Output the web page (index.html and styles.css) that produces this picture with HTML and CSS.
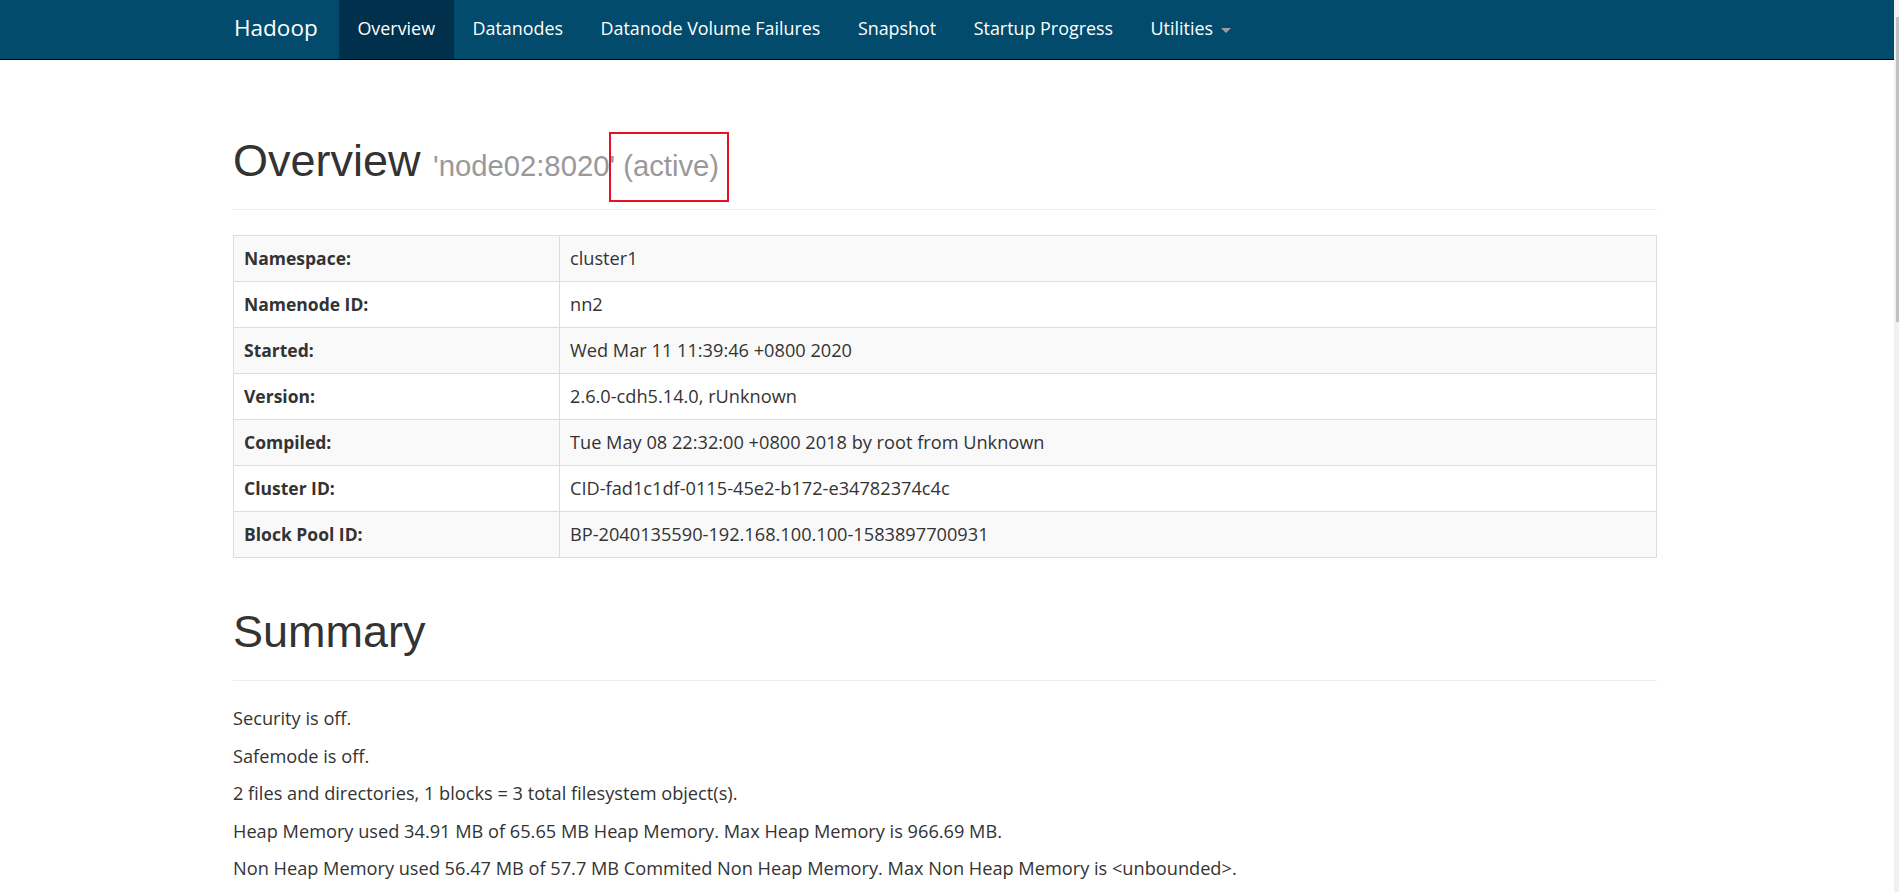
FILE: index.html
```html
<!DOCTYPE html>
<html lang="en">

<head>
    <meta charset="UTF-8" />
    <title>Namenode information</title>
    <link rel="stylesheet" href="styles.css">
</head>

<body>
    <div class="page">
        <div class="main">
            <nav class="navbar">
                <div class="container navbar-inner">
                    <a class="brand" href="#">Hadoop</a>
                    <ul class="nav">
                        <li class="active"><a href="#">Overview</a></li>
                        <li><a href="#">Datanodes</a></li>
                        <li><a href="#">Datanode Volume Failures</a></li>
                        <li><a href="#">Snapshot</a></li>
                        <li><a href="#">Startup Progress</a></li>
                        <li><a href="#">Utilities <span class="caret"></span></a></li>
                    </ul>
                </div>
            </nav>

            <div class="container content">
                <div class="page-header">
                    <h1>Overview <small>'node02:8020' <span class="marked">(active)</span></small></h1>
                </div>

                <table class="info-table">
                    <tr><th>Namespace:</th><td>cluster1</td></tr>
                    <tr><th>Namenode ID:</th><td>nn2</td></tr>
                    <tr><th>Started:</th><td>Wed Mar 11 11:39:46 +0800 2020</td></tr>
                    <tr><th>Version:</th><td>2.6.0-cdh5.14.0, rUnknown</td></tr>
                    <tr><th>Compiled:</th><td>Tue May 08 22:32:00 +0800 2018 by root from Unknown</td></tr>
                    <tr><th>Cluster ID:</th><td>CID-fad1c1df-0115-45e2-b172-e34782374c4c</td></tr>
                    <tr><th>Block Pool ID:</th><td>BP-2040135590-192.168.100.100-1583897700931</td></tr>
                </table>

                <div class="page-header">
                    <h1>Summary</h1>
                </div>

                <p>Security is off.</p>
                <p>Safemode is off.</p>
                <p>2 files and directories, 1 blocks = 3 total filesystem object(s).</p>
                <p>Heap Memory used 34.91 MB of 65.65 MB Heap Memory. Max Heap Memory is 966.69 MB.</p>
                <p>Non Heap Memory used 56.47 MB of 57.7 MB Commited Non Heap Memory. Max Non Heap Memory is &lt;unbounded&gt;.</p>
            </div>
        </div>

        <!-- thin window scrollbar at the right edge -->
        <div class="scrollbar">
            <div class="thumb"></div>
        </div>
    </div>
</body>

</html>
```

FILE: styles.css
```css
html,
body {
    margin: 0;
    padding: 0;
    height: 100%;
    overflow: hidden;
}

body {
    font-family: "Open Sans", "Noto Sans", Arial, sans-serif;
    font-size: 18.2px;
    line-height: 25px;
    color: #333;
    background-color: #fff;
}

.page {
    display: flex;
    height: 100vh;
}

.main {
    flex: 1;
    min-width: 0;
}

.container {
    width: 1424px;
    margin: 0 auto;
}

/* top navigation bar */
.navbar {
    background-color: #024b6c;
    border-bottom: 1px solid #000;
}

.navbar-inner {
    display: flex;
    align-items: stretch;
    height: 59px;
    position: relative;
    left: -2px;
}

.brand {
    color: #fff;
    text-decoration: none;
    font-size: 22.5px;
    line-height: 25px;
    padding: 15px 21px 19px 1px;
}

.nav {
    list-style: none;
    margin: 0;
    padding: 0;
    display: flex;
    font-size: 17.9px;
}

.nav li a {
    display: block;
    color: #fff;
    text-decoration: none;
    padding: 16px 18.75px 18px;
}

.nav li.active a {
    background-color: #01304c;
}

.caret {
    display: inline-block;
    width: 0;
    height: 0;
    margin-left: 3px;
    vertical-align: middle;
    border-top: 5px solid #9d9d9d;
    border-left: 5px solid transparent;
    border-right: 5px solid transparent;
}

/* page content */
.content {
    width: 1428px;
    padding-top: 52px;
    padding-right: 4px;
    box-sizing: border-box;
}

.page-header {
    display: flow-root;
    padding-bottom: 11px;
    margin: 0 0 25px;
    border-bottom: 1px solid #eee;
}

.page-header h1 {
    font-family: "Liberation Sans", Arial, sans-serif;
    font-size: 45px;
    font-weight: 400;
    line-height: 1.1;
    color: #333;
    margin: 24px 0 12.5px;
}

.page-header h1 small {
    font-size: 65%;
    color: #999;
}

/* red rectangle drawn over the screenshot */
.marked {
    position: relative;
}

.marked::after {
    content: "";
    position: absolute;
    left: -14px;
    right: -10px;
    top: -18px;
    bottom: -20px;
    border: 2px solid #e81123;
}

.info-table {
    width: 100%;
    border-collapse: collapse;
    margin-bottom: 25px;
}

.info-table th,
.info-table td {
    border: 1px solid #ddd;
    padding: 10px;
    text-align: left;
    vertical-align: top;
}

.info-table th {
    width: 305px;
    font-size: 17.5px;
    font-weight: 700;
}

.info-table tr:nth-child(odd) {
    background-color: #f9f9f9;
}

p {
    margin: 0 0 12.5px;
}

.scrollbar {
    width: 5px;
    background-color: #f0f0f0;
    display: flex;
    justify-content: flex-end;
}

.thumb {
    width: 3px;
    height: 305px;
    margin-top: 17px;
    background-color: #c1c1c1;
}
```
